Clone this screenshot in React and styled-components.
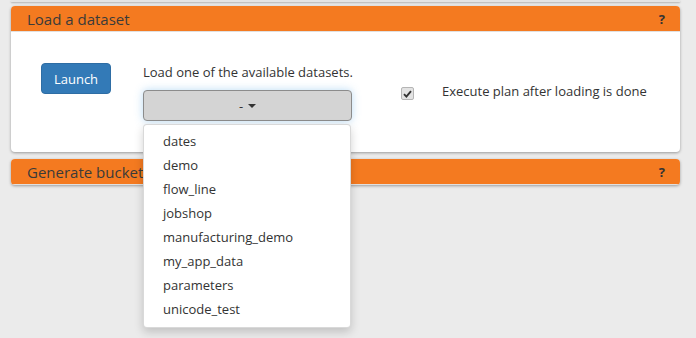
import React from "react";
import styled, { createGlobalStyle } from "styled-components";

const Global = createGlobalStyle`
  html, body { margin: 0; padding: 0; background: #ebebeb; }
  body { font-family: "Open Sans", "Noto Sans", sans-serif; font-size: 13px; color: #333; }
`;

const Page = styled.div`
  position: relative;
  width: 696px;
  height: 338px;
  overflow: hidden;
  padding: 6px 0 0 11px;
  box-sizing: border-box;
  &::before {
    content: "";
    position: absolute;
    left: 11px;
    top: 0;
    width: 669px;
    height: 2px;
    background: #e4e4e4;
    box-shadow: 0 1px 2px rgba(0,0,0,0.25);
  }
`;

const Panel = styled.section`
  width: 669px;
  background: #fff;
  border-radius: 4px;
  box-shadow: 0 1px 3px rgba(0,0,0,0.35);
  margin-bottom: 7px;
  overflow: hidden;
`;

const Header = styled.div`
  height: 26px;
  background: #f47a20;
  border-bottom: 1px solid #e0e0e0;
  box-sizing: border-box;
  display: flex;
  align-items: center;
  justify-content: space-between;
  padding: 0 15px 0 16px;
`;

const Title = styled.span`
  font-size: 15px;
  color: #3a3a3a;
  line-height: 26px;
`;

const Help = styled.span`
  font-weight: 700;
  font-size: 13px;
  color: #333;
`;

const Body = styled.div`
  height: 120px;
  box-sizing: border-box;
  padding: 31px 0 0 30px;
  display: flex;
  align-items: flex-start;
`;

const LaunchButton = styled.button`
  width: 70px;
  height: 31px;
  background: #337ab7;
  border: 1px solid #2e6da4;
  border-radius: 4px;
  color: #fff;
  font-family: inherit;
  font-size: 13px;
  padding: 0;
  margin-right: 32px;
`;

const Middle = styled.div`
  display: flex;
  flex-direction: column;
  width: 209px;
  margin-right: 49px;
`;

const Hint = styled.div`
  line-height: 18px;
  margin-bottom: 9px;
  white-space: nowrap;
`;

const Select = styled.div`
  height: 31px;
  box-sizing: border-box;
  background: #d4d4d4;
  border: 1px solid #8c8c8c;
  border-radius: 4px;
  box-shadow: 0 0 8px rgba(102, 175, 233, 0.45);
  display: flex;
  align-items: center;
  justify-content: center;
  gap: 5px;
  color: #333;
`;

const Caret = styled.span`
  width: 0;
  height: 0;
  border-left: 4px solid transparent;
  border-right: 4px solid transparent;
  border-top: 4px solid #333;
`;

const CheckBox = styled.span`
  width: 11px;
  height: 11px;
  margin-top: 24px;
  margin-right: 28px;
  border: 1px solid #b5b5b5;
  border-radius: 2px;
  background: #e3e3e3;
  display: flex;
  align-items: center;
  justify-content: center;
`;

const Label = styled.span`
  line-height: 18px;
  margin-top: 19px;
`;

const Menu = styled.ul`
  position: absolute;
  left: 143px;
  top: 124px;
  width: 208px;
  margin: 0;
  padding: 4px 0 6px;
  list-style: none;
  background: #fff;
  border: 1px solid rgba(0,0,0,0.15);
  border-radius: 4px;
  box-shadow: 0 4px 10px rgba(0,0,0,0.18);
  box-sizing: border-box;
`;

const Item = styled.li`
  height: 24px;
  line-height: 24px;
  padding-left: 19px;
  color: #333;
`;

const datasets = [
  "dates",
  "demo",
  "flow_line",
  "jobshop",
  "manufacturing_demo",
  "my_app_data",
  "parameters",
  "unicode_test",
];

export default function App() {
  return (
    <>
      <Global />
      <Page>
        <Panel>
          <Header>
            <Title>Load a dataset</Title>
            <Help>?</Help>
          </Header>
          <Body>
            <LaunchButton>Launch</LaunchButton>
            <Middle>
              <Hint>Load one of the available datasets.</Hint>
              <Select>
                <span>-</span>
                <Caret />
              </Select>
            </Middle>
            <CheckBox>
              <svg width="9" height="8" viewBox="0 0 9 8">
                <path d="M1 4.2 L3.4 6.6 L8 1.2" fill="none" stroke="#333" strokeWidth="1.9" />
              </svg>
            </CheckBox>
            <Label>Execute plan after loading is done</Label>
          </Body>
        </Panel>
        <Panel>
          <Header>
            <Title>Generate buckets</Title>
            <Help>?</Help>
          </Header>
        </Panel>
        <Menu>
          {datasets.map((d) => (
            <Item key={d}>{d}</Item>
          ))}
        </Menu>
      </Page>
    </>
  );
}
